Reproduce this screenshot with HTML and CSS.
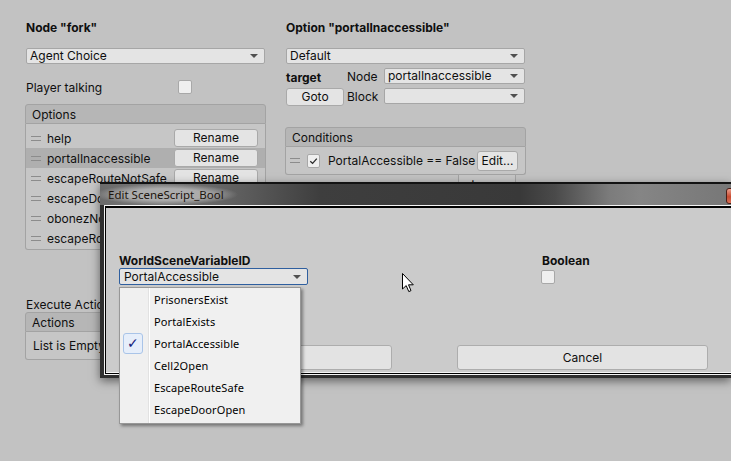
FILE: index.html
```html
<!DOCTYPE html>
<html>
<head>
<meta charset="utf-8">
<link rel="stylesheet" href="styles.css">
</head>
<body>
<div class="editor">
  <section class="col">
    <div class="title">Node "fork"</div>
    <div class="dropdown">Agent Choice</div>
    <div class="toggle-row"><span class="toggle-label">Player talking</span><span class="checkbox"></span></div>
    <div class="list options">
      <div class="list-head">Options</div>
      <div class="list-body opt-body">
        <div class="opt-row"><span class="handle"></span><span class="opt-name">help</span><button class="btn rename">Rename</button></div>
        <div class="opt-row selected"><span class="handle"></span><span class="opt-name">portalInaccessible</span><button class="btn rename">Rename</button></div>
        <div class="opt-row"><span class="handle"></span><span class="opt-name">escapeRouteNotSafe</span><button class="btn rename">Rename</button></div>
        <div class="opt-row"><span class="handle"></span><span class="opt-name">escapeDoorLocked</span><button class="btn rename">Rename</button></div>
        <div class="opt-row"><span class="handle"></span><span class="opt-name">obonezNotHere</span><button class="btn rename">Rename</button></div>
        <div class="opt-row"><span class="handle"></span><span class="opt-name">escapeRouteSafe</span><button class="btn rename">Rename</button></div>
      </div>
    </div>
    <div class="sub-label">Execute Actions</div>
    <div class="list">
      <div class="list-head">Actions</div>
      <div class="list-body empty">List is Empty</div>
    </div>
  </section>
  <section class="col">
    <div class="title">Option "portalInaccessible"</div>
    <div class="dropdown">Default</div>
    <div class="target-grid">
      <span class="bold-label">target</span><span class="grid-label">Node</span><div class="dropdown">portalInaccessible</div>
      <button class="btn goto">Goto</button><span class="grid-label">Block</span><div class="dropdown"></div>
    </div>
    <div class="list conditions">
      <div class="list-head">Conditions</div>
      <div class="list-body">
        <div class="cond-row"><span class="handle"></span><span class="checkbox checked"><svg viewBox="0 0 12 12" width="12" height="12"><path d="M2.5 6.2 L5 8.6 L9.6 3.4" fill="none" stroke="#2a2a2a" stroke-width="1.4"/></svg></span><span class="cond-text">PortalAccessible == False</span><button class="btn edit">Edit...</button></div>
      </div>
      <div class="list-foot"><span>+</span><span>−</span></div>
    </div>
  </section>
</div>

<div class="window">
  <div class="win-title"><span class="win-caption">Edit SceneScript_Bool</span><span class="win-close"></span></div>
  <div class="win-frame">
    <div class="win-edge">
      <div class="client">
        <div class="dlg-fields">
          <div class="field-var">
            <div class="dlg-label">WorldSceneVariableID</div>
            <div class="dropdown focused">PortalAccessible</div>
          </div>
          <div class="field-bool">
            <div class="dlg-label">Boolean</div>
            <span class="checkbox"></span>
          </div>
        </div>
        <div class="dlg-buttons">
          <button class="btn dlg-btn">OK</button>
          <button class="btn dlg-btn">Cancel</button>
        </div>
      </div>
    </div>
  </div>
</div>

<div class="popup">
  <div class="popup-item">PrisonersExist</div>
  <div class="popup-item">PortalExists</div>
  <div class="popup-item checked-item"><span class="check-box">✓</span>PortalAccessible</div>
  <div class="popup-item">Cell2Open</div>
  <div class="popup-item">EscapeRouteSafe</div>
  <div class="popup-item">EscapeDoorOpen</div>
</div>

<svg class="cursor" width="13" height="20" viewBox="0 0 13 20"><path d="M0.5 0.5 L0.5 16 L4.2 12.6 L6.8 18.6 L9 17.6 L6.5 11.8 L11.3 11.8 Z" fill="#fff" stroke="#000" stroke-width="1" stroke-linejoin="round"/></svg>
</body>
</html>
```
FILE: styles.css
```css
html, body {
  margin: 0;
}
body {
  background: #c2c2c2;
  font-family: Inter, "Liberation Sans", sans-serif;
  font-size: 12px;
  color: #0f0f0f;
  width: 731px;
  height: 461px;
  overflow: hidden;
  position: relative;
}
.editor {
  display: flex;
  gap: 21px;
  padding: 20px 0 0 26px;
}
.col {
  width: 239px;
  display: flex;
  flex-direction: column;
}
.title {
  font-weight: 700;
  line-height: 16px;
  height: 16px;
}
.dropdown {
  height: 16px;
  box-sizing: border-box;
  border: 1px solid #a6a6a6;
  border-radius: 2px;
  background: #e4e4e4;
  line-height: 14px;
  padding-left: 3px;
  position: relative;
  white-space: nowrap;
}
.dropdown::after {
  content: "";
  position: absolute;
  right: 6px;
  top: 5px;
  border-left: 4px solid transparent;
  border-right: 4px solid transparent;
  border-top: 4px solid #505050;
}
.col > .dropdown {
  margin-top: 12px;
}
.toggle-row {
  display: flex;
  align-items: center;
  height: 18px;
  margin-top: 14px;
}
.toggle-label {
  width: 152px;
}
.checkbox {
  width: 14px;
  height: 14px;
  box-sizing: border-box;
  border: 1px solid #a8a8a8;
  border-radius: 2px;
  background: #efefef;
  display: inline-flex;
  align-items: center;
  justify-content: center;
  flex: none;
}
.list {
  margin-left: -1px;
  width: 241px;
}
.options {
  margin-top: 8px;
}
.list-head {
  height: 20px;
  box-sizing: border-box;
  border: 1px solid #a3a3a3;
  border-radius: 3px 3px 0 0;
  background: #b6b6b6;
  padding-left: 6px;
  line-height: 19px;
}
.list-body {
  border: 1px solid #a3a3a3;
  border-top: none;
  border-radius: 0 0 3px 3px;
  background: #c6c6c6;
}
.opt-body {
  padding: 4px 0 1px;
}
.opt-row {
  height: 20px;
  display: flex;
  align-items: center;
  padding-left: 5px;
  padding-right: 7px;
}
.opt-row.selected {
  background: #afafaf;
}
.handle {
  width: 10px;
  height: 3px;
  border-top: 1px solid #8c8c8c;
  border-bottom: 1px solid #8c8c8c;
  flex: none;
}
.opt-name {
  margin-left: 6px;
  flex: 1;
  white-space: nowrap;
  overflow: hidden;
}
.btn {
  font: inherit;
  color: inherit;
  background: #e4e4e4;
  border: 1px solid #a9a9a9;
  border-radius: 3px;
  padding: 0;
  box-sizing: border-box;
}
.rename {
  width: 84px;
  height: 18px;
  line-height: 16px;
}
.sub-label {
  margin-top: 47px;
  line-height: 15px;
  height: 15px;
  white-space: nowrap;
}
.empty {
  height: 28px;
  box-sizing: border-box;
  padding-left: 7px;
  line-height: 27px;
}
.target-grid {
  margin-top: 4px;
  display: grid;
  grid-template-columns: 61px 37px 141px;
  grid-template-rows: 16px 18px;
  row-gap: 4px;
  align-items: start;
}
.bold-label {
  font-weight: 700;
  line-height: 16px;
  padding-top: 2px;
}
.grid-label {
  line-height: 16px;
  padding-top: 1px;
}
.goto {
  width: 58px;
  height: 18px;
  line-height: 16px;
}
.conditions {
  margin-top: 21px;
}
.cond-row {
  height: 27px;
  display: flex;
  align-items: center;
  padding-left: 4px;
  padding-right: 7px;
}
.cond-row .checkbox {
  margin-left: 7px;
  width: 13px;
  height: 14px;
}
.cond-text {
  margin-left: 8px;
  flex: 1;
  white-space: nowrap;
}
.edit {
  width: 41px;
  height: 20px;
  line-height: 18px;
}
.list-foot {
  margin-left: auto;
  margin-right: 10px;
  width: 58px;
  height: 20px;
  box-sizing: border-box;
  border: 1px solid #a3a3a3;
  border-top: none;
  border-radius: 0 0 3px 3px;
  background: #c6c6c6;
  display: flex;
  justify-content: space-around;
  line-height: 14px;
  font-size: 14px;
}

/* dialog window */
.window {
  position: absolute;
  left: 100px;
  top: 182px;
  width: 631px;
  border-top: 2px solid #121212;
  box-shadow: 0 3px 9px rgba(0, 0, 0, 0.5);
  font-family: Inter, "Liberation Sans", sans-serif;
  overflow: hidden;
}
.win-title {
  height: 21px;
  position: relative;
  background: linear-gradient(90deg, #6a6a6a 0px, #7a7a7a 60px, #5a5a5a 150px, #3e3e3e 220px, #393939 420px, #4a4a4a 455px, #7c7c7c 510px, #858585 540px, #777 631px);
  padding-left: 8px;
  line-height: 21px;
}
.win-caption {
  display: inline-block;
  font-family: "Noto Sans", "Open Sans", sans-serif;
  font-size: 11.5px;
  color: #1c140c;
  padding: 0 14px;
  margin-left: -14px;
  line-height: 21px;
  background: radial-gradient(ellipse closest-side, rgba(175, 175, 175, 0.95) 55%, rgba(150, 150, 150, 0));
}
.win-close {
  position: absolute;
  left: 626px;
  top: 4px;
  width: 44px;
  height: 14px;
  border: 1px solid #4a1e16;
  border-radius: 3px;
  background: linear-gradient(#eba08e, #c84a30 55%, #d8735a);
}
.win-frame {
  background: #2f2f2f;
  padding: 0 0 3px 4px;
}
.win-edge {
  border: 1px solid #f4f4f4;
  border-right: none;
}
.client {
  border: 1px solid #000;
  border-top-width: 2px;
  border-right: none;
  background: #cbcbcb;
  box-shadow: inset 0 -1px 0 #f4f4f4;
  box-sizing: border-box;
  height: 168px;
}
.dlg-fields {
  display: flex;
  padding: 44px 0 0 13px;
}
.field-var {
  width: 189px;
}
.dlg-label {
  font-weight: 700;
  line-height: 16px;
  height: 16px;
  white-space: nowrap;
  padding-top: 1px;
  margin-bottom: -1px;
}
.dropdown.focused {
  height: 17px;
  border-color: #2f5f9f;
  line-height: 15px;
  padding-left: 4px;
}
.dropdown.focused::after {
  right: 6px;
  top: 6px;
}
.field-bool {
  margin-left: 234px;
}
.field-bool .checkbox {
  margin-top: 2px;
  margin-left: -1px;
}
.dlg-buttons {
  display: flex;
  gap: 65px;
  padding: 58px 0 0 35px;
}
.dlg-btn {
  width: 251px;
  height: 25px;
  line-height: 23px;
  background: #e3e3e3;
  border-color: #adadad;
}

/* popup menu */
.popup {
  position: absolute;
  left: 119px;
  top: 287px;
  width: 182px;
  height: 137px;
  box-sizing: border-box;
  padding-top: 1px;
  border: 1px solid #979797;
  background: linear-gradient(90deg, #f0f0f0 28px, #e2e2e2 28px, #e2e2e2 29px, #fff 29px, #fff 30px, #f0f0f0 30px);
  box-shadow: 2px 2px 3px rgba(0, 0, 0, 0.4);
  font-family: "Noto Sans", "Open Sans", sans-serif;
  font-size: 11px;
  letter-spacing: 0.1px;
  color: #000;
  z-index: 5;
}
.popup-item {
  height: 22px;
  line-height: 22px;
  padding-left: 34px;
  position: relative;
  white-space: nowrap;
}
.check-box {
  position: absolute;
  left: 3px;
  top: 0;
  width: 20px;
  height: 21px;
  box-sizing: border-box;
  border: 1px solid #a9c4e8;
  border-radius: 3px;
  background: #e6eefa;
  color: #16207a;
  text-align: center;
  line-height: 19px;
  font-size: 14px;
  font-family: "DejaVu Sans", sans-serif;
}
.cursor {
  position: absolute;
  left: 402px;
  top: 273px;
  z-index: 6;
}
```
